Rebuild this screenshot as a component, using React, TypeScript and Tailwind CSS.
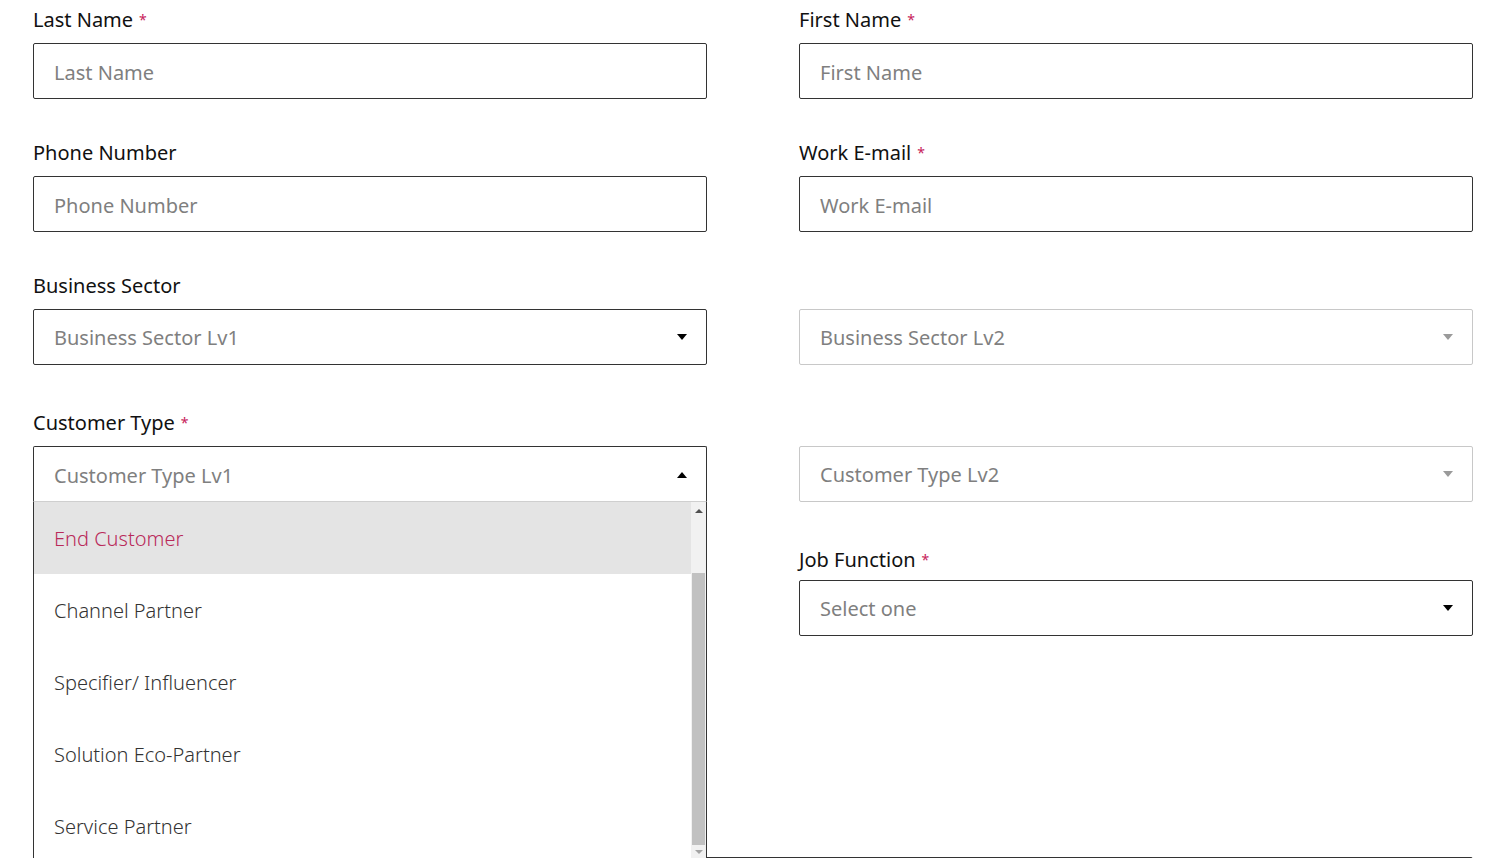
import React from "react"

const font = { fontFamily: '"Noto Sans", "Open Sans", sans-serif' }

const customerTypes = [
  "End Customer",
  "Channel Partner",
  "Specifier/ Influencer",
  "Solution Eco-Partner",
  "Service Partner",
]

function Label({ text, required }: { text: string; required?: boolean }) {
  return (
    <div className="flex h-[24px] items-center text-[20px] leading-[24px] text-[#111]">
      {text}
      {required && <span className="ml-[6px] text-[14px] text-[#c7225a]">*</span>}
    </div>
  )
}

function Caret({ up, muted }: { up?: boolean; muted?: boolean }) {
  return (
    <svg width="10" height="6" viewBox="0 0 10 6" className="shrink-0">
      <path d={up ? "M0 6 L5 0 L10 6 Z" : "M0 0 L10 0 L5 6 Z"} fill={muted ? "#9a9a9a" : "#000"} />
    </svg>
  )
}

function TextBox({ placeholder }: { placeholder: string }) {
  return (
    <div className="flex h-[56px] items-center rounded-[2px] border border-[#333] px-[20px] pt-[3px] text-[20px] text-[#7f7f7f]">
      {placeholder}
    </div>
  )
}

function SelectBox({ placeholder, disabled }: { placeholder: string; disabled?: boolean }) {
  return (
    <div
      className={`flex h-[56px] items-center justify-between rounded-[2px] border pl-[20px] pr-[19px] text-[20px] text-[#7f7f7f] ${
        disabled ? "border-[#c8c8c8]" : "border-[#333]"
      }`}
    >
      <span className="pt-[2px]">{placeholder}</span>
      <Caret muted={disabled} />
    </div>
  )
}

function Field({ label, required, children }: { label: string; required?: boolean; children: React.ReactNode }) {
  return (
    <div className="flex flex-col gap-[11px]">
      <Label text={label} required={required} />
      {children}
    </div>
  )
}

export default function App() {
  return (
    <div className="h-[858px] overflow-hidden bg-white px-[33px] pt-[8px]" style={font}>
      <div className="grid grid-cols-2 gap-x-[92px]">
        <Field label="Last Name" required>
          <TextBox placeholder="Last Name" />
        </Field>
        <Field label="First Name" required>
          <TextBox placeholder="First Name" />
        </Field>
      </div>

      <div className="mt-[42px] grid grid-cols-2 gap-x-[92px]">
        <Field label="Phone Number">
          <TextBox placeholder="Phone Number" />
        </Field>
        <Field label="Work E-mail" required>
          <TextBox placeholder="Work E-mail" />
        </Field>
      </div>

      <div className="mt-[42px] grid grid-cols-2 gap-x-[92px]">
        <Field label="Business Sector">
          <SelectBox placeholder="Business Sector Lv1" />
        </Field>
        <div className="mt-[35px]">
          <SelectBox placeholder="Business Sector Lv2" disabled />
        </div>
      </div>

      <div className="mt-[46px] grid grid-cols-2 gap-x-[92px]">
        <Field label="Customer Type" required>
          <div className="relative z-10">
            <div className="flex h-[56px] items-center justify-between rounded-t-[2px] border border-b-0 border-[#333] pl-[20px] pr-[19px] text-[20px] text-[#7f7f7f]">
              <span className="pt-[2px]">Customer Type Lv1</span>
              <Caret up />
            </div>
            <div className="absolute left-0 right-0 top-[55px] flex h-[360px] border-x border-t border-x-[#333] border-t-[#cfcfcf] bg-white">
              <ul className="flex-1">
                {customerTypes.map((t, i) => (
                  <li
                    key={t}
                    className={`flex h-[72px] items-center pl-[20px] pt-[2px] text-[20px] font-light ${
                      i === 0 ? "bg-[#e4e4e4] text-[#b92a5a]" : "text-[#333]"
                    }`}
                  >
                    {t}
                  </li>
                ))}
              </ul>
              <div className="flex w-[15px] flex-col items-center bg-[#f1f1f1]">
                <div className="flex h-[17px] items-center">
                  <svg width="8" height="4" viewBox="0 0 8 4">
                    <path d="M0 4 L4 0 L8 4 Z" fill="#505050" />
                  </svg>
                </div>
                <div className="mt-[54px] h-[272px] w-[13px] bg-[#c1c1c1]" />
                <div className="flex h-[14px] items-center">
                  <svg width="8" height="4" viewBox="0 0 8 4">
                    <path d="M0 0 L8 0 L4 4 Z" fill="#a3a3a3" />
                  </svg>
                </div>
              </div>
            </div>
          </div>
        </Field>
        <div className="mt-[35px] flex flex-col">
          <SelectBox placeholder="Customer Type Lv2" disabled />
          <div className="mt-[46px] flex flex-col gap-[8px]">
            <Label text="Job Function" required />
            <SelectBox placeholder="Select one" />
          </div>
        </div>
      </div>

      <div className="mt-[221px] h-[120px] rounded-[2px] border border-[#333]" />
    </div>
  )
}
